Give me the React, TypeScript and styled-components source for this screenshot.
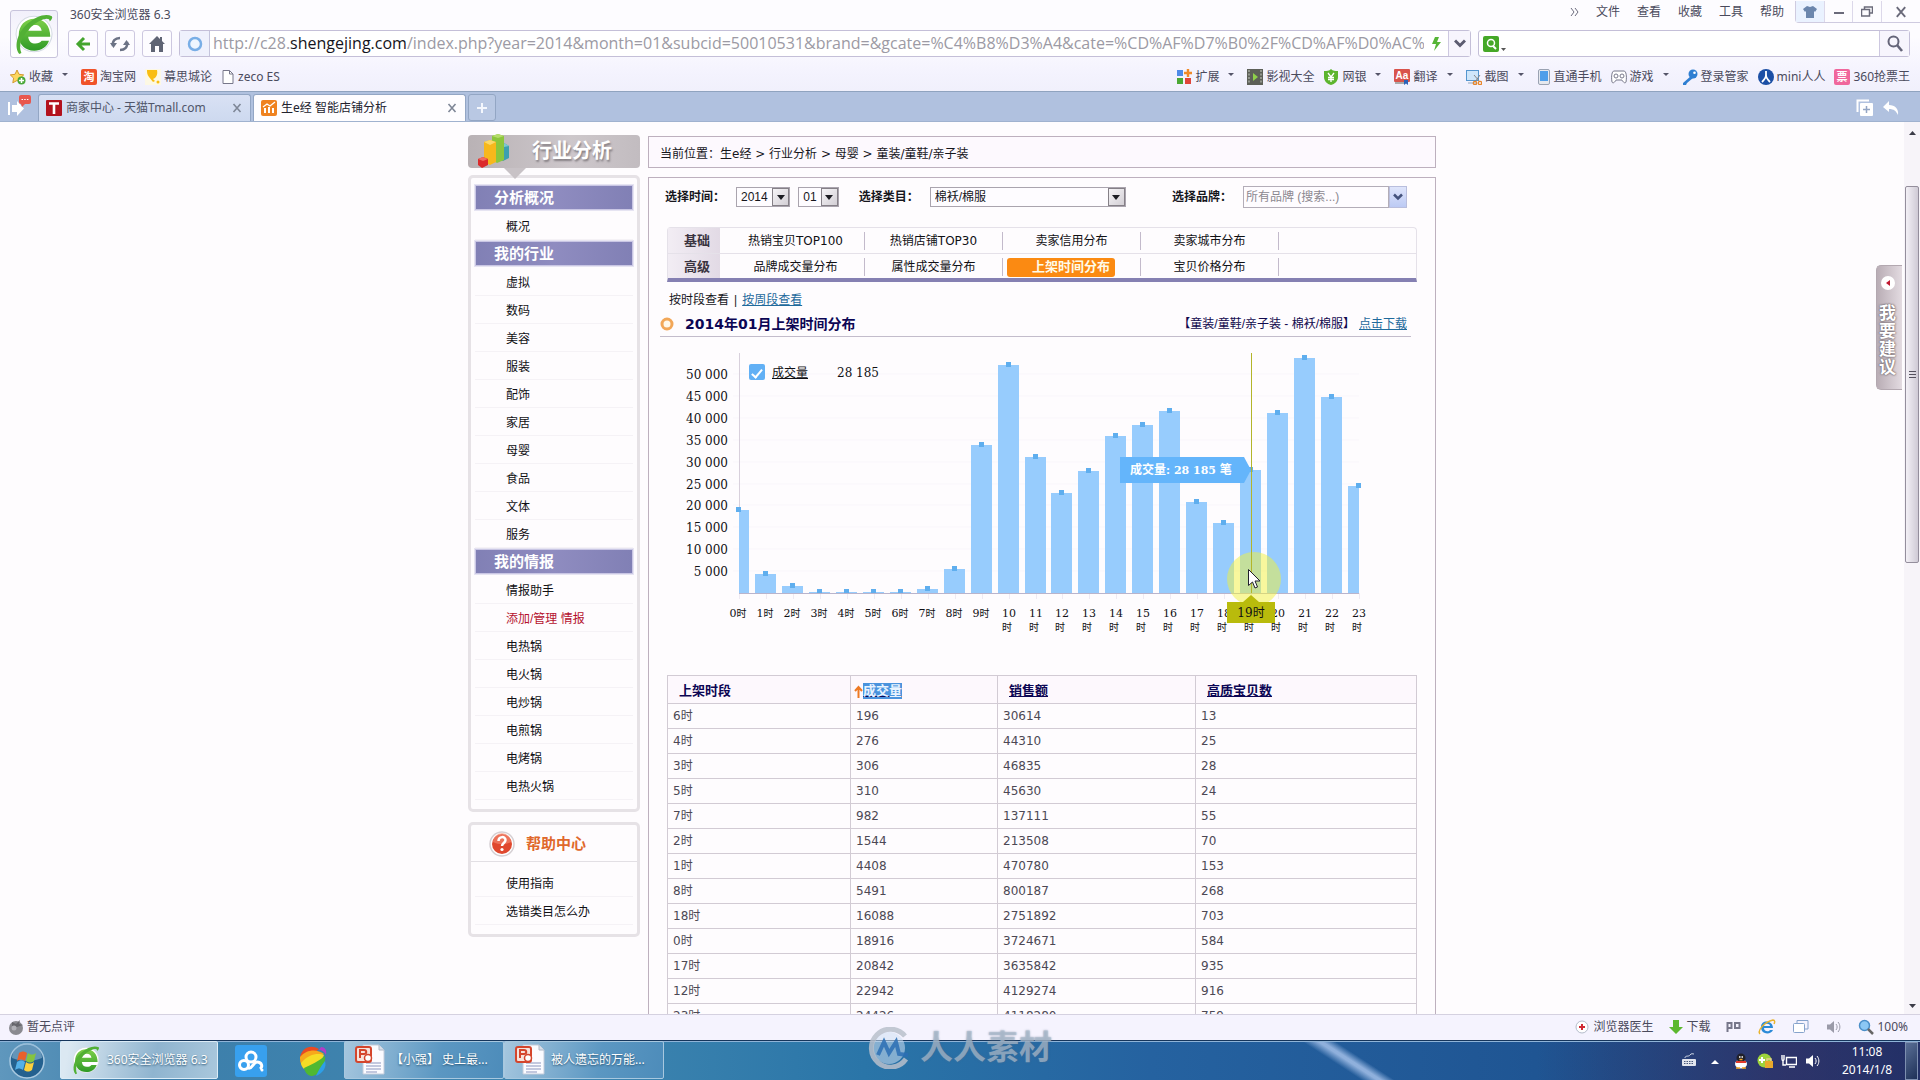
import React from 'react';
import styled, { createGlobalStyle, css } from 'styled-components';

const ui = '"Noto Sans", "Noto Sans CJK SC", sans-serif';
const arial = '"Liberation Sans", "Noto Sans CJK SC", sans-serif';
const verdana = '"DejaVu Sans", "Noto Sans CJK SC", sans-serif';
const georgia = '"DejaVu Serif", "Noto Sans CJK SC", serif';

const Global = createGlobalStyle`
  *, *::before, *::after { box-sizing: border-box; }
  body { margin: 0; background: #fefcfe; }
  button, input, select { font: inherit; color: inherit; margin: 0; }
  ul { list-style: none; margin: 0; padding: 0; }
  svg { display: block; flex: none; }
`;

const Screen = styled.div`
  position: relative;
  height: 100vh;
  display: flex;
  flex-direction: column;
  overflow: hidden;
  font: 12px/16px ${ui};
  color: #4a4a5c;
`;

const plainButton = css`
  appearance: none;
  border: 0;
  background: none;
  padding: 0;
  display: flex;
  align-items: center;
  justify-content: center;
  white-space: nowrap;
`;

/* ---------- browser chrome ---------- */
const Chrome = styled.header`
  flex: none;
  background: linear-gradient(#fdfcff 30%, #f4f3fe 60%, #ebebf8);
`;
const ChromeTop = styled.div`
  display: flex;
  gap: 10px;
  padding: 0 10px 0 10px;
`;
const LogoButton = styled.button`
  ${plainButton}
  width: 48px;
  height: 48px;
  margin-top: 10px;
  border: 1px solid #c8c4dc;
  border-radius: 3px;
  background: linear-gradient(#f2f0fb, #fff);
`;
const ChromeRight = styled.div`
  flex: 1;
  min-width: 0;
`;
const TitleRow = styled.div`
  display: flex;
  justify-content: space-between;
  height: 30px;
  margin-right: -10px;
`;
const WindowTitle = styled.span`
  padding: 7px 0 0 2px;
`;
const Menu = styled.nav`
  display: flex;
  gap: 17px;
  height: 24px;
  align-items: center;
`;
const MenuButton = styled.button`
  ${plainButton}
`;
const WindowButtons = styled.div`
  display: flex;
  margin-left: -6px;
  height: 22px;
  border: 1px solid #cfcbe0;
  border-width: 0 0 1px 1px;
  border-radius: 0 0 0 4px;
`;
const WindowButton = styled.button<{ $w: number; $tint?: boolean }>`
  ${plainButton}
  width: ${(p) => p.$w}px;
  background: ${(p) => (p.$tint ? '#eaf2ff' : 'transparent')};
  & + & { border-left: 1px solid #dcd8ea; }
`;
const AddressRow = styled.div`
  display: flex;
  gap: 7px;
  height: 27px;
`;
const ToolButton = styled.button`
  ${plainButton}
  width: 30px;
  border: 1px solid #cdc8e0;
  border-radius: 3px;
  background: #fdfcff;
`;
const AddressBar = styled.div`
  flex: 1;
  min-width: 0;
  display: flex;
  align-items: stretch;
  border: 1px solid #c4bfd8;
  border-radius: 3px;
  background: #fff;
`;
const Identity = styled.button`
  ${plainButton}
  width: 30px;
  background: #eff1fc;
  border-right: 1px solid #c4c4dc;
`;
const Url = styled.div`
  flex: 1;
  min-width: 0;
  padding-left: 3px;
  overflow: hidden;
  white-space: nowrap;
  font: 16px/25px "Open Sans", "Noto Sans", sans-serif;
  color: #9c9aa4;
  outline: 0;
  b { font-weight: 400; color: #141420; }
`;
const BarButton = styled.button<{ $w: number; $line?: boolean }>`
  ${plainButton}
  width: ${(p) => p.$w}px;
  ${(p) => p.$line && 'border-left: 1px solid #cdc8e0; background: #f7f5fd;'}
`;
const SearchBar = styled.form`
  display: flex;
  width: 432px;
  border: 1px solid #c4bfd8;
  border-radius: 3px;
  background: #fff;
`;
const SearchInput = styled.input`
  flex: 1;
  min-width: 0;
  border: 0;
  background: none;
  outline: 0;
`;
const Bookmarks = styled.nav`
  display: flex;
  justify-content: space-between;
  height: 34px;
  padding: 4px 10px 0;
  border-bottom: 1px solid #8fa3bf;
`;
const BookmarkGroup = styled.div`
  display: flex;
  align-items: center;
  gap: 9px;
`;
const Bookmark = styled.button`
  ${plainButton}
  gap: 3px;
`;
const Caret = styled.i`
  margin: 0 4px 4px 6px;
  border: 3px solid transparent;
  border-top-color: #555568;
  border-bottom: 0;
`;
const TabBar = styled.div`
  display: flex;
  align-items: flex-end;
  height: 30px;
  padding: 0 20px 0 0;
  background: #b0c1df;
  border-bottom: 1px solid #a0b2cf;
`;
const SideToggle = styled.button`
  ${plainButton}
  width: 38px;
  height: 29px;
`;
const Tab = styled.div<{ $active?: boolean }>`
  display: flex;
  align-items: center;
  gap: 4px;
  width: 213px;
  height: 27px;
  margin-right: 2px;
  padding: 0 8px 0 7px;
  border: 1px solid #93a6c4;
  border-bottom: 0;
  border-radius: 3px 3px 0 0;
  background: ${(p) => (p.$active ? '#fefdff' : 'linear-gradient(#d9e1f4, #cdd9ef)')};
  color: ${(p) => (p.$active ? '#22222e' : '#50566a')};
`;
const TabLabel = styled.button`
  ${plainButton}
  flex: 1;
  justify-content: flex-start;
`;
const NewTab = styled.button`
  ${plainButton}
  width: 28px;
  height: 27px;
  border: 1px solid #93a6c4;
  border-radius: 3px;
  background: #b9c8e3;
`;
const TabTools = styled.div`
  display: flex;
  gap: 8px;
  align-items: center;
  height: 27px;
  margin-left: auto;
`;

/* ---------- web page ---------- */
const Viewport = styled.div`
  position: relative;
  flex: 1;
  min-height: 0;
  display: flex;
  overflow: hidden;
`;
const Page = styled.div`
  flex: 1;
  min-width: 0;
  display: flex;
  justify-content: center;
  align-items: flex-start;
  gap: 8px;
  padding-top: 13px;
  overflow: hidden;
  background: #fefcfe;
  font-family: ${arial};
  color: #16161c;
`;
const Sidebar = styled.aside`
  width: 172px;
  flex: none;
`;
const SideTitle = styled.h1`
  position: relative;
  display: flex;
  align-items: center;
  gap: 22px;
  height: 33px;
  margin: 0 0 7px;
  padding: 0 0 2px 10px;
  border-radius: 4px;
  background: linear-gradient(90deg, #b9b2b5, #cdc7cb 60%, #c2bcc0);
  font: bold 20px/30px ${arial};
  color: #fff;
  text-shadow: 1px 2px 2px #857f84;
  &::after {
    content: '';
    position: absolute;
    left: 36px;
    top: 33px;
    z-index: 1;
    border: 11px solid transparent;
    border-top-color: #c8c2c6;
    border-bottom: 0;
  }
`;
const SideBox = styled.section`
  border: 3px solid #e6e2e6;
  border-radius: 5px;
  padding: 6px 4px 9px;
  & + & { margin-top: 10px; padding: 0 0 9px; }
`;
const SideHeading = styled.h2`
  height: 25px;
  margin: 1px 0 2px;
  padding-left: 18px;
  border: 1px solid #c9c6e4;
  outline: 1px solid #e6e4f2;
  background: linear-gradient(90deg, #8180b5, #8f8cc0 50%, #8180b5);
  font: bold 15px/24px ${arial};
  color: #fff;
`;
const SideItem = styled.li<{ $red?: boolean }>`
  height: 28px;
  padding-left: 31px;
  border-bottom: 1px solid #f5f2f6;
  line-height: 30px;
  a {
    color: ${(p) => (p.$red ? '#b5122e' : '#101014')};
    text-decoration: none;
  }
`;
const HelpHeading = styled.h2`
  display: flex;
  align-items: center;
  gap: 11px;
  height: 37px;
  margin: 0 0 7px;
  padding: 2px 0 0 18px;
  border-bottom: 1px solid #e2dfe4;
  font: bold 15px/20px ${arial};
  color: #e0682c;
`;
const HelpList = styled.ul`
  padding: 0 4px;
`;
const Main = styled.main`
  width: 788px;
  flex: none;
  padding-top: 1px;
`;
const Crumbs = styled.nav`
  height: 32px;
  margin-bottom: 9px;
  padding-left: 11px;
  border: 1px solid #bdb0be;
  background: #fdf9fe;
  font: 12px/34px ${verdana};
`;
const Panel = styled.section`
  border: 1px solid #bdb0be;
  padding: 8px 18px 0;
`;
const Filters = styled.div`
  display: flex;
  align-items: center;
  height: 22px;
  margin: 0 10px 19px -2px;
`;
const FilterLabel = styled.label`
  width: 72px;
  font-weight: bold;
`;
const Picker = styled.span<{ $w: number; $gap: number }>`
  display: grid;
  width: ${(p) => p.$w}px;
  height: 20px;
  margin-right: ${(p) => p.$gap}px;
  border: 1px solid #aaa4ae;
  > * { grid-area: 1 / 1; }
`;
const PickerSelect = styled.select`
  appearance: none;
  min-width: 0;
  padding: 0 4px;
  border: 0;
  background: #fefcff;
`;
const PickerArrow = styled.span`
  justify-self: end;
  display: grid;
  place-items: center;
  width: 17px;
  border: 1px solid #858087;
  background: linear-gradient(135deg, #f6f4f7, #d3cfd5);
  pointer-events: none;
`;
const BrandBox = styled.span`
  display: flex;
  width: 164px;
  height: 22px;
  margin-left: auto;
`;
const BrandInput = styled.input`
  flex: 1;
  min-width: 0;
  padding: 0 2px;
  border: 1px solid #b3adb8;
  background: #fefcff;
  &::placeholder { color: #8c8890; opacity: 1; }
`;
const BrandButton = styled.button`
  ${plainButton}
  width: 18px;
  border: 1px solid #b9bedd;
  background: linear-gradient(#dfe5fb, #bccaf4);
`;
const NavGrid = styled.nav`
  margin-bottom: 8px;
  border: 1px solid #e5e1e9;
  border-bottom: 4px solid #8580b2;
  border-radius: 4px 4px 0 0;
  font-family: ${verdana};
`;
const NavRow = styled.div`
  display: flex;
  height: 25px;
  & + & { border-top: 1px solid #e5e1e9; }
`;
const NavHead = styled.strong`
  width: 52px;
  margin-right: 7px;
  padding-left: 16px;
  line-height: 25px;
  font-size: 13px;
  color: #3a3440;
  background: linear-gradient(90deg, #f2edf4, #e2dae5);
`;
const NavCell = styled.span`
  width: 138px;
  height: 18px;
  margin-top: 4px;
  border-right: 1px solid #c3bacb;
  line-height: 18px;
  text-align: center;
`;
const NavLink = styled.a<{ $on?: boolean }>`
  color: #101014;
  text-decoration: none;
  ${(p) => p.$on && css`
    display: block;
    width: 108px;
    height: 19px;
    margin-left: 4px;
    padding-right: 5px;
    border-radius: 3px;
    background: #fb8a12;
    color: #fffbe8;
    font-size: 13px;
    font-weight: bold;
    text-align: right;
  `}
`;
const ViewSwitch = styled.p`
  display: flex;
  gap: 5px;
  height: 20px;
  margin: 0 0 1px;
  padding-left: 2px;
  line-height: 21px;
`;
const Link = styled.a`
  color: #1f6a9c;
  text-decoration: underline;
`;
const SectionTitle = styled.div`
  display: flex;
  align-items: center;
  height: 26px;
  margin: 0 6px 0 -7px;
  border-bottom: 1px solid #c3bccb;
  padding-right: 4px;
  h2 {
    flex: 1;
    margin: 0 0 0 11px;
    font: bold 14px/20px ${verdana};
    color: #0c0654;
  }
  span { color: #120a4e; margin-right: 4px; }
`;
const ChartFrame = styled.figure`
  position: relative;
  margin: 0;
  height: 338px;
`;
const Legend = styled.div`
  position: absolute;
  left: 82px;
  top: 26px;
  display: flex;
  align-items: center;
  color: #101014;
  label { margin: 2px 29px 0 7px; text-decoration: underline; }
  output { padding-top: 2px; font: 12px/16px ${georgia}; }
`;
const LegendCheck = styled.input`
  appearance: none;
  width: 16px;
  height: 16px;
  border-radius: 2px;
  background: #62b0f5;
  display: grid;
  place-items: center;
  &:checked::before {
    content: '';
    width: 6px;
    height: 11px;
    border: solid #fff;
    border-width: 0 2px 2px 0;
    transform: rotate(40deg);
  }
`;
const DataTable = styled.table`
  width: 100%;
  table-layout: fixed;
  border-collapse: collapse;
  font: 12px/16px ${verdana};
  color: #4c4854;
  th, td { border: 1px solid #d2cbd4; text-align: left; }
  td { height: 25px; padding: 0 5px; }
  th {
    height: 28px;
    padding: 3px 11px 0;
    background: #fdf8fd;
    color: #0c0654;
    font-size: 13px;
  }
`;
const SortButton = styled.button<{ $active?: boolean }>`
  ${plainButton}
  font-weight: bold;
  text-decoration: underline;
  ${(p) => p.$active && 'margin-left: -8px;'}
  mark { background: #4a93dd; color: #e8f3ff; }
`;
const Col = styled.col<{ $w: string }>`
  width: ${(p) => p.$w};
`;
const Feedback = styled.button`
  ${plainButton}
  position: absolute;
  right: 18px;
  top: 143px;
  flex-direction: column;
  gap: 14px;
  width: 26px;
  height: 125px;
  padding: 0 4px 3px 0;
  border: 1px solid #b3a8b0;
  border-right: 0;
  border-radius: 5px 0 0 5px;
  background: linear-gradient(90deg, #b9adb5, #e3dbe1);
  font: bold 17px/18px ${arial};
  color: #fff;
  text-shadow: 0 0 2px #6d6369, 0 0 2px #6d6369;
  span { width: 17px; white-space: normal; }
`;
const Scrollbar = styled.div`
  display: flex;
  flex-direction: column;
  align-items: center;
  justify-content: space-between;
  width: 16px;
  padding: 9px 0 6px;
  background: #f7f4f9;
`;
const Thumb = styled.div`
  display: grid;
  place-items: center;
  width: 14px;
  height: 43%;
  margin: 51px 0 auto;
  border: 1px solid #948e9c;
  border-radius: 2px;
  background: linear-gradient(90deg, #f3f0f6, #cfcad5);
`;

/* ---------- status bar and taskbar ---------- */
const StatusBar = styled.footer`
  flex: none;
  display: flex;
  align-items: center;
  justify-content: space-between;
  height: 26px;
  padding: 0 12px 2px 8px;
  border-top: 1px solid #d5d1e0;
  background: #f5f3fe;
`;
const StatusGroup = styled.div`
  display: flex;
  align-items: center;
  gap: 16px;
`;
const StatusButton = styled.button`
  ${plainButton}
  gap: 3px;
`;
const Taskbar = styled.footer`
  flex: none;
  display: flex;
  align-items: stretch;
  height: 40px;
  border-top: 1px solid #16365c;
  box-shadow: inset 0 1px 0 #8fb4d8;
  background:
    linear-gradient(33deg, #8fb0dc00 42%, #8fb0dc 49%, #8fb0dc 51%, #8fb0dc00 57%) 1270px 0 / 160px 40px no-repeat,
    linear-gradient(90deg, transparent 80%, #3b255a88 93%, #2a1c5866),
    linear-gradient(90deg, #5f97bd, #3d7fab 8%, #3f86b0 30%, #2a75a8 45%, #2562a0 60%, #1f5593 80%, #1d3d70);
  color: #fff;
`;
const Start = styled.button`
  ${plainButton}
  width: 54px;
  margin-right: 6px;
`;
const Task = styled.button<{ $w: number; $active?: boolean }>`
  ${plainButton}
  justify-content: flex-start;
  gap: 6px;
  width: ${(p) => p.$w}px;
  margin: 0 ${(p) => (p.$active ? 2 : 0)}px 1px 0;
  padding-left: 10px;
  border: 1px solid ${(p) => (p.$active ? '#dcecf7' : '#a8c8df')};
  border-radius: 2px;
  background: ${(p) => (p.$active
    ? 'linear-gradient(100deg, #dbe8f2 5%, #8fb4cf 60%, #a9c7dc)'
    : 'linear-gradient(100deg, #a5c6de, #5b97c2 60%, #4d8cba)')};
  text-shadow: 0 1px 2px #24506f;
`;
const PinnedTask = styled.button`
  ${plainButton}
  width: 62px;
`;
const Tray = styled.div`
  display: flex;
  align-items: center;
  gap: 8px;
  margin-left: auto;
`;
const Clock = styled.time`
  width: 62px;
  margin: 0 -1px 0 7px;
  line-height: 18px;
  text-align: center;
`;
const ShowDesktop = styled.button`
  ${plainButton}
  width: 13px;
  height: 38px;
  margin-right: 2px;
  border: 1px solid #7d8fb0;
  background: linear-gradient(135deg, #5a6f96, #1e3158);
`;
const Watermark = styled.div`
  position: absolute;
  left: 868px;
  bottom: 10px;
  display: flex;
  align-items: center;
  gap: 10px;
  font: bold 33px/44px ${arial};
  color: #aebfd0a8;
  text-shadow: 0 0 2px #5c708799;
  pointer-events: none;
`;

/* ---------- icons ---------- */
const Svg = ({ s = 16, w, h, vb, children }: { s?: number; w?: number; h?: number; vb?: string; children: React.ReactNode }) => (
  <svg width={w ?? s} height={h ?? s} viewBox={vb ?? `0 0 ${w ?? s} ${h ?? s}`} fill="none" aria-hidden="true">{children}</svg>
);

const BrowserLogo = ({ s }: { s: number }) => (
  <Svg s={s} vb="0 0 40 40">
    <defs>
      <linearGradient id="leaf" x1="0" y1="0" x2="0" y2="1"><stop offset="0" stopColor="#7ed04a" /><stop offset="1" stopColor="#2f9a26" /></linearGradient>
    </defs>
    <path d="M20 3a17 17 0 1 0 .1 0Z" fill="#fff" stroke="#d5dbe4" />
    <path d="M35.500 22.500H14.500c.5 4.500 3 6.500 6.800 6.500 2.700 0 4.600-.8 6-2.500h7c-2 6-7.400 9.500-14 9.500C11.500 36 5.500 30 5.500 21S11.500 5.500 20.500 5.500s15 6.500 15 17ZM14.700 17h12.600c-.6-3.600-2.900-5.500-6.200-5.500-3.400 0-5.700 2-6.400 5.500Z" fill="url(#leaf)" />
    <path d="M6 39C1 33 3 20 14 10 22 3 31 0 37 3c1 1 0 3-2 5 0-3-3-3-6-2-6 2-11 6-15 11C8 24 5 31 8 38Z" fill="#52b035" />
  </Svg>
);
const StarIcon = () => (
  <Svg><path d="m7 1 2 4.300 4.700.6-3.400 3.200.8 4.700L7 11.500l-4.200 2.300.8-4.700L.3 5.900 5 5.300Z" fill="#fcd75e" stroke="#d39a2e" />
    <circle cx="11.500" cy="11.500" r="4" fill="#4aa83a" /><path d="M11.500 9v5M9 11.500h5" stroke="#fff" strokeWidth="1.500" /></Svg>
);
const GlyphIcon = ({ bg, ch, round = 2 }: { bg: string; ch: string; round?: number }) => (
  <Svg><rect width="16" height="16" rx={round} fill={bg} /><text x="8" y="12" textAnchor="middle" fontSize="11" fontWeight="bold" fill="#fff" fontFamily={arial}>{ch}</text></Svg>
);
const TrophyIcon = () => (
  <Svg><rect width="16" height="16" fill="#fdf8e4" /><path d="M2 1h10c1 5-1 8-4 9l2 2-2 1-4-5C2 6 2 3 2 1Z" fill="#f9bd12" /><circle cx="13" cy="13" r="1.500" fill="#f9bd12" /></Svg>
);
const PageIcon = () => (
  <Svg w={14} h={16}><path d="M2 1.500h6.500L12 5v9.500H2Z" fill="#fff" stroke="#77778a" /><path d="M8.500 1.500V5H12" stroke="#77778a" /></Svg>
);
const AppsIcon = () => (
  <Svg><path d="M1 1h6v6H1z" fill="#4f8be8" /><path d="M1 9h6v6H1z" fill="#4aa834" /><path d="M9 9h6v6H9z" fill="#e0453a" /><path d="M12 0v8M8 4h8" stroke="#f08a28" strokeWidth="2.400" /></Svg>
);
const FilmIcon = () => (
  <Svg><path d="M0 0h16v16H0z" fill="#5d6058" /><path d="M2 1v14M14 1v14" stroke="#c8ccc2" strokeDasharray="2 1.500" /><path d="m6 4 5 4-5 4Z" fill="#8ed04a" /></Svg>
);
const ShieldIcon = () => (
  <Svg><path d="M8 0c2 2 4 2 7 2v6c0 4-3 7-7 8-4-1-7-4-7-8V2c3 0 5 0 7-2Z" fill="#5cb52e" /><path d="m5 4 3 4 3-4M8 8v5M5 8.500h6M5 10.500h6" stroke="#fff" strokeWidth="1.300" /></Svg>
);
const TranslateIcon = () => (
  <Svg><rect width="16" height="13" rx="1" fill="#d9544c" /><text x="8" y="10" textAnchor="middle" fontSize="10" fontWeight="bold" fill="#fff" fontFamily={arial}>Aa</text><path d="M1 14h9" stroke="#aaa" strokeWidth="2" /><path d="M10 11h4v5l-2-1.500L10 16Z" fill="#2b62b8" /></Svg>
);
const CropIcon = () => (
  <Svg><rect x=".5" y="1.500" width="12" height="10" fill="#cfe6fa" stroke="#5596cf" /><path d="M2 14h9" stroke="#8fa7bd" /><path d="m8 6 6 7M14 6l-5 7" stroke="#888" /><circle cx="9" cy="14" r="1.700" stroke="#e8862a" strokeWidth="1.300" /><circle cx="14" cy="14" r="1.700" stroke="#e8862a" strokeWidth="1.300" /></Svg>
);
const PhoneIcon = () => (
  <Svg w={14}><rect x="1.500" y=".5" width="11" height="15" rx="1.500" fill="#e5e8ee" stroke="#9aa2b2" /><path d="M3 2h8v10H3z" fill="#4e9eea" /></Svg>
);
const PadIcon = () => (
  <Svg><path d="M3 2h10c2 0 3 5 2 11-1 2-3 0-4-2H5c-1 2-3 4-4 2C0 7 1 2 3 2Z" fill="#fff" stroke="#77788a" /><circle cx="5" cy="7" r="2" stroke="#77788a" /><circle cx="11" cy="7" r="2" stroke="#77788a" /></Svg>
);
const KeyIcon = () => (
  <Svg><path d="M9 7 1 14v2h3l1-2 6-5Z" fill="#2f7fd2" /><circle cx="11" cy="5" r="4.500" fill="#2f7fd2" /><circle cx="12.500" cy="3.800" r="1.300" fill="#fff" /></Svg>
);
const RenrenIcon = () => (
  <Svg><circle cx="8" cy="8" r="8" fill="#1c4fa5" /><path d="M8 2v4c0 3-2 5-4 7M8 6c0 3 2 5 4 7" stroke="#fff" strokeWidth="1.800" /></Svg>
);
const CloseIcon = ({ c = '#7f8797', s = 10 }) => (
  <Svg s={s} vb="0 0 10 10"><path d="m1.500 1 7 8m0-8-7 8" stroke={c} strokeWidth="1.600" /></Svg>
);
const SpeakerIcon = ({ c }: { c: string }) => (
  <Svg><path d="M1 5.500h3L8 2v12l-4-3.500H1Z" fill={c} /><path d="M10 5c1.500 2 1.500 4 0 6m2-8c2.500 3 2.500 7 0 10" stroke={c} /></Svg>
);
const PptIcon = () => (
  <Svg w={30} h={32}>
    <path d="M8 1h16l5 5v24H8Z" fill="#fbfbff" stroke="#c4ccda" /><path d="M24 1v5h5" fill="#d8dfe9" stroke="#b0b9c8" />
    <path d="M11 19h15M11 22h15M11 25h15M11 28h11" stroke="#8a95bd" />
    <rect x="1" y="3" width="15" height="15" rx="2" fill="#f7e3dc" stroke="#d4452c" strokeWidth="2" />
    <path d="M5 14V6h4c3 0 3 4 0 4H6" stroke="#d4452c" strokeWidth="2" /><circle cx="13" cy="14" r="3.500" fill="#fff" stroke="#d4452c" strokeWidth="1.500" />
  </Svg>
);

/* ---------- data ---------- */
const hourly = [18916, 4408, 1544, 306, 276, 310, 196, 982, 5491, 33850, 52100, 31130, 22942, 27900, 35900, 38450, 41600, 20842, 16088, 28185, 41200, 53750, 44850, 24426];
const rows = [
  ['6时', '196', '30614', '13'], ['4时', '276', '44310', '25'], ['3时', '306', '46835', '28'],
  ['5时', '310', '45630', '24'], ['7时', '982', '137111', '55'], ['2时', '1544', '213508', '70'],
  ['1时', '4408', '470780', '153'], ['8时', '5491', '800187', '268'], ['18时', '16088', '2751892', '703'],
  ['0时', '18916', '3724671', '584'], ['17时', '20842', '3635842', '935'], ['12时', '22942', '4129274', '916'],
  ['23时', '24426', '4118280', '759'],
];
const sideGroups = [
  { title: '分析概况', items: ['概况'] },
  { title: '我的行业', items: ['虚拟', '数码', '美容', '服装', '配饰', '家居', '母婴', '食品', '文体', '服务'] },
  { title: '我的情报', items: ['情报助手', '添加/管理 情报', '电热锅', '电火锅', '电炒锅', '电煎锅', '电烤锅', '电热火锅'] },
];
const navRows = [
  { head: '基础', items: ['热销宝贝TOP100', '热销店铺TOP30', '卖家信用分布', '卖家城市分布'] },
  { head: '高级', items: ['品牌成交量分布', '属性成交量分布', '上架时间分布', '宝贝价格分布'] },
];

const spaced = (n: number) => String(n).replace(/(\d)(?=(\d{3})+$)/g, '$1 ');

const HourChart = () => {
  const left = 72;
  const base = 256;
  const right = 692;
  const unit = 0.00438;
  const top = (v: number) => Math.round(base - v * unit);
  const hourX = (i: number) => Math.round(left + (i * (right - left)) / 23);
  return (
    <svg width="100%" height="338" role="img" aria-label="上架时间分布" fontFamily={georgia} fill="#101014">
      {Array.from({ length: 10 }, (_, i) => (i + 1) * 5000).map((v) => (
        <g key={v}>
          <path d={`M${left - 6} ${top(v)}H${right}`} stroke="#f9f6fb" />
          <text x="61" y={top(v) + 5} fontSize="12" textAnchor="end">{spaced(v)}</text>
        </g>
      ))}
      <path d={`M${left + 0.5} 16V${base}`} stroke="#d8d0dc" />
      {hourly.map((v, i) => {
        const x = hourX(i);
        const from = i === 0 ? x : x - 11;
        const to = i === 23 ? x : x + 10;
        return (
          <g key={i}>
            <path d={`M${x + 0.5} ${base}v6`} stroke="#efeaf2" />
            <rect x={from} y={top(v)} width={to - from} height={base - top(v)} fill="#97ccfd" />
            <rect x={x - 3} y={top(v) - 3} width="5" height="5" fill="#5faeee" />
            {i < 10
              ? <text x={x - 1} y={base + 24} fontSize="11" textAnchor="middle">{i}<tspan fontSize="10">时</tspan></text>
              : (
                <text y={base + 24} fontSize="11" textAnchor="middle">
                  <tspan x={x}>{i}</tspan><tspan x={x - 2} dy="14" fontSize="10">时</tspan>
                </text>
              )}
          </g>
        );
      })}
      <path d={`M${left} ${base + 0.5}H${right}`} stroke="#b9b4cc" />
      <circle cx="587" cy="242" r="27" fill="#f2f23c" fillOpacity=".5" />
      <path d="M584.500 16V256" stroke="#b3b52a" />
      <path d="M453 120h124l7 13-7 13H453Z" fill="#64b5fb" />
      <text x="463" y="137" fontSize="12" fontWeight="bold" fill="#fff">
        成交量<tspan fontSize="11">: 28 185 </tspan>笔
      </text>
      <path d="M560 265h16l8-7 8 7h16v21h-48Z" fill="#b9bb0c" />
      <text x="584" y="280" fontSize="12" textAnchor="middle">19时</text>
      <path d="M581.500 232.500v16l4-3.500 2.500 6 2.500-1-2.500-6h5Z" fill="#fff" stroke="#20202c" />
    </svg>
  );
};

const SelectField = ({ id, label, value, w, gap }: { id: string; label: string; value: string; w: number; gap: number }) => (
  <Picker $w={w} $gap={gap}>
    <PickerSelect id={id} aria-label={label} defaultValue={value}><option>{value}</option></PickerSelect>
    <PickerArrow><Svg w={8} h={5}><path d="M0 0h8L4 5Z" fill="#1c1c22" /></Svg></PickerArrow>
  </Picker>
);

const Item = ({ icon, label, more }: { icon: React.ReactNode; label: string; more?: boolean }) => (
  <Bookmark>{icon}{label}{more && <Caret />}</Bookmark>
);

export default function App() {
  return (
    <Screen>
      <Global />
      <Chrome>
        <ChromeTop>
          <LogoButton aria-label="360"><BrowserLogo s={42} /></LogoButton>
          <ChromeRight>
            <TitleRow>
              <WindowTitle>360安全浏览器 6.3</WindowTitle>
              <Menu>
                <MenuButton aria-label="more"><Svg w={9} h={10}><path d="m1 1 3 4-3 4m4-8 3 4-3 4" stroke="#6c6c7e" /></Svg></MenuButton>
                {['文件', '查看', '收藏', '工具', '帮助'].map((m) => <MenuButton key={m}>{m}</MenuButton>)}
                <WindowButtons>
                  <WindowButton $w={28} $tint aria-label="skin"><Svg w={14} h={12}><path d="m4 0 3 1 3-1 4 3-2 3-1-1v7H3V5L2 6 0 3Z" fill="#6b86ad" /></Svg></WindowButton>
                  <WindowButton $w={28} aria-label="minimize"><Svg w={10} h={10}><path d="M0 6h10" stroke="#6a6a7a" strokeWidth="2" /></Svg></WindowButton>
                  <WindowButton $w={29} aria-label="restore"><Svg w={12} h={12}><path d="M3.500 3V1h8v6H9M.5 3.500h8V10h-8Z" stroke="#6a6a7a" strokeWidth="1.500" /></Svg></WindowButton>
                  <WindowButton $w={39} aria-label="close"><CloseIcon c="#6a6a7a" s={12} /></WindowButton>
                </WindowButtons>
              </Menu>
            </TitleRow>
            <AddressRow>
              <ToolButton aria-label="back"><Svg><path d="M9 2 3 8l6 6M3 8h12" stroke="#44a52e" strokeWidth="3" /></Svg></ToolButton>
              <ToolButton aria-label="reload"><Svg s={20}><path d="M3 12c-1-5 2-8 7-8m7 4c1 5-2 8-7 8" stroke="#6c7385" strokeWidth="2.400" /><path d="m0 9 3.500 5L7 9ZM13 11l3.500-5L20 11Z" fill="#6c7385" /></Svg></ToolButton>
              <ToolButton aria-label="home"><Svg s={18}><path d="M9 1 1 9h2v8h4v-6h4v6h4V9h2l-3-3V2h-2v2Z" fill="#5f6474" /></Svg></ToolButton>
              <AddressBar>
                <Identity aria-label="site"><Svg><circle cx="8" cy="8" r="6" fill="#eef6ff" stroke="#78aee6" strokeWidth="2.500" /></Svg></Identity>
                <Url role="textbox" aria-label="address" contentEditable suppressContentEditableWarning spellCheck={false}>
                  http://c28.<b>shengejing.com</b>/index.php?year=2014&amp;month=01&amp;subcid=50010531&amp;brand=&amp;gcate=%C4%B8%D3%A4&amp;cate=%CD%AF%D7%B0%2F%CD%AF%D0%AC%
                </Url>
                <BarButton $w={24} aria-label="speed"><Svg w={10} h={14}><path d="M4 0h4L6 5h4L3 14l2-7H1Z" fill="#56b536" /></Svg></BarButton>
                <BarButton $w={22} $line aria-label="history"><Svg w={12} h={9}><path d="m1 1.500 5 5 5-5" stroke="#5c5c70" strokeWidth="3" /></Svg></BarButton>
              </AddressBar>
              <SearchBar>
                <BarButton $w={32} type="button" aria-label="engine">
                  <Svg w={24} h={16}><rect width="16" height="16" rx="2" fill="#45a827" /><circle cx="8" cy="7" r="3.500" stroke="#fff" strokeWidth="1.500" /><path d="m10 10 3 3" stroke="#fff" strokeWidth="2" /><path d="M18 12h5l-2.500 3Z" fill="#555" /></Svg>
                </BarButton>
                <SearchInput aria-label="search" />
                <BarButton $w={30} $line type="submit" aria-label="go"><Svg s={18}><circle cx="7.500" cy="6.500" r="5" stroke="#656579" strokeWidth="2" /><path d="m11 10 5 6" stroke="#656579" strokeWidth="2.600" /></Svg></BarButton>
              </SearchBar>
            </AddressRow>
          </ChromeRight>
        </ChromeTop>
        <Bookmarks>
          <BookmarkGroup>
            <Item icon={<StarIcon />} label="收藏" more />
            <Item icon={<GlyphIcon bg="#f0532a" ch="淘" />} label="淘宝网" />
            <Item icon={<TrophyIcon />} label="幕思城论" />
            <Item icon={<PageIcon />} label="zeco ES" />
          </BookmarkGroup>
          <BookmarkGroup>
            <Item icon={<AppsIcon />} label="扩展" more />
            <Item icon={<FilmIcon />} label="影视大全" />
            <Item icon={<ShieldIcon />} label="网银" more />
            <Item icon={<TranslateIcon />} label="翻译" more />
            <Item icon={<CropIcon />} label="截图" more />
            <Item icon={<PhoneIcon />} label="直通手机" />
            <Item icon={<PadIcon />} label="游戏" more />
            <Item icon={<KeyIcon />} label="登录管家" />
            <Item icon={<RenrenIcon />} label="mini人人" />
            <Item icon={<GlyphIcon bg="#f0679c" ch="票" />} label="360抢票王" />
          </BookmarkGroup>
        </Bookmarks>
        <TabBar>
          <SideToggle aria-label="sidebar">
            <Svg w={24} h={26}><path d="M2 8v13" stroke="#fff" strokeWidth="2" /><path d="M5 11h5V7l7 7.500-7 7.500v-4H5Z" fill="#fff" /><rect x="12" y="1" width="12" height="9" rx="2" fill="#e8574e" /><path d="m14 10 1 3 3-3" fill="#e8574e" /><path d="M14.500 5.500h7" stroke="#fff" strokeDasharray="1.500 1.200" /></Svg>
          </SideToggle>
          <Tab>
            <Svg><rect width="16" height="16" rx="1" fill="#b3121d" /><path d="M3 3.500h10M8 3.500V14" stroke="#fff" strokeWidth="2.600" /></Svg>
            <TabLabel>商家中心 - 天猫Tmall.com</TabLabel>
            <MenuButton aria-label="close tab"><CloseIcon /></MenuButton>
          </Tab>
          <Tab $active>
            <Svg><rect width="16" height="16" rx="2" fill="#ef8321" /><path d="M4 13V8m4 5V7m4 6V8" stroke="#fff" strokeWidth="2" /><path d="m2 7 4-3 3 2 5-4" stroke="#fff" strokeWidth="1.300" /></Svg>
            <TabLabel>生e经 智能店铺分析</TabLabel>
            <MenuButton aria-label="close tab"><CloseIcon /></MenuButton>
          </Tab>
          <NewTab aria-label="new tab"><Svg w={12} h={12}><path d="M6 1v10M1 6h10" stroke="#f4f7fd" strokeWidth="2" /></Svg></NewTab>
          <TabTools>
            <MenuButton aria-label="duplicate"><Svg s={18}><path d="M1.500 13V1.500H13" stroke="#fff" strokeWidth="2" /><rect x="4" y="4" width="13" height="13" rx="1" fill="#fff" /><path d="M10.500 7v7M7 10.500h7" stroke="#93a5c4" strokeWidth="1.500" /></Svg></MenuButton>
            <MenuButton aria-label="undo"><Svg s={18}><path d="m7 2-6 6 6 5V10c5 0 7 2 9 6 1-6-3-10-9-10Z" fill="#fff" /></Svg></MenuButton>
          </TabTools>
        </TabBar>
      </Chrome>

      <Viewport>
        <Page>
          <Sidebar>
            <SideTitle>
              <Svg w={32} h={34}>
                <path d="m20 11 6-2 5 3v12l-6 3-5-2Z" fill="#3d9fb0" /><path d="m20 11 6 2 5-1-5-3Z" fill="#7cc8cf" />
                <path d="m14 2 6-2 6 2v24l-7 3-5-3Z" fill="#8cc63c" /><path d="m14 2 6 2 6-2-6-2Z" fill="#b5dc6c" />
                <path d="m6 8 6-2 6 2v20l-6 3-6-3Z" fill="#f7b81c" /><path d="m6 8 6 3 6-3-6-2Z" fill="#fbd96a" />
                <path d="m0 25 5-2 5 2v6l-6 3-4-3Z" fill="#db2a2c" /><path d="m0 25 5 2 5-2-5-2Z" fill="#ef6d5e" />
              </Svg>
              行业分析
            </SideTitle>
            <SideBox>
              {sideGroups.map((g) => (
                <React.Fragment key={g.title}>
                  <SideHeading>{g.title}</SideHeading>
                  <ul>
                    {g.items.map((t) => <SideItem key={t} $red={t.startsWith('添加')}><a href="#item">{t}</a></SideItem>)}
                  </ul>
                </React.Fragment>
              ))}
            </SideBox>
            <SideBox>
              <HelpHeading>
                <Svg s={26}><circle cx="13" cy="13" r="12" fill="#fff" stroke="#d5cfd3" strokeWidth="1.500" /><circle cx="13" cy="13" r="10" fill="#e0482e" /><path d="M4 11a9 9 0 0 1 18 0c-6 3-12 3-18 0Z" fill="#f39078" fillOpacity=".6" /><path d="M9.500 10c0-5 7-5 7-1 0 3-3.500 3-3.500 6" stroke="#fff" strokeWidth="2.500" /><circle cx="13" cy="18.500" r="1.600" fill="#fff" /></Svg>
                帮助中心
              </HelpHeading>
              <HelpList>
                {['使用指南', '选错类目怎么办'].map((t) => <SideItem key={t}><a href="#help">{t}</a></SideItem>)}
              </HelpList>
            </SideBox>
          </Sidebar>

          <Main>
            <Crumbs>当前位置：生e经 &gt; 行业分析 &gt; 母婴 &gt; 童装/童鞋/亲子装</Crumbs>
            <Panel>
              <Filters>
                <FilterLabel htmlFor="year">选择时间：</FilterLabel>
                <SelectField id="year" label="年" value="2014" w={55} gap={8} />
                <SelectField id="month" label="月" value="01" w={41} gap={20} />
                <FilterLabel htmlFor="cate">选择类目：</FilterLabel>
                <SelectField id="cate" label="类目" value="棉袄/棉服" w={199} gap={46} />
                <FilterLabel htmlFor="brand">选择品牌：</FilterLabel>
                <BrandBox>
                  <BrandInput id="brand" placeholder="所有品牌 (搜索...)" />
                  <BrandButton aria-label="品牌"><Svg w={10} h={8}><path d="m1 1.500 4 4 4-4" stroke="#44527c" strokeWidth="2.500" /></Svg></BrandButton>
                </BrandBox>
              </Filters>
              <NavGrid>
                {navRows.map((r) => (
                  <NavRow key={r.head}>
                    <NavHead>{r.head}</NavHead>
                    {r.items.map((t) => (
                      <NavCell key={t}><NavLink href="#nav" $on={t === '上架时间分布'}>{t}</NavLink></NavCell>
                    ))}
                  </NavRow>
                ))}
              </NavGrid>
              <ViewSwitch><span>按时段查看</span>|<Link href="#week">按周段查看</Link></ViewSwitch>
              <SectionTitle>
                <Svg s={14}><circle cx="7" cy="7" r="5" fill="#fff8ea" stroke="#f2a758" strokeWidth="3" /></Svg>
                <h2>2014年01月上架时间分布</h2>
                <span>【童装/童鞋/亲子装 - 棉袄/棉服】</span>
                <Link href="#download">点击下载</Link>
              </SectionTitle>
              <ChartFrame>
                <HourChart />
                <Legend>
                  <LegendCheck type="checkbox" id="series" defaultChecked />
                  <label htmlFor="series">成交量</label>
                  <output>28 185</output>
                </Legend>
              </ChartFrame>
              <DataTable>
                <colgroup><Col $w="183px" /><Col $w="147px" /><Col $w="198px" /><Col $w="auto" /></colgroup>
                <thead>
                  <tr>
                    <th>上架时段</th>
                    <th>
                      <SortButton $active>
                        <Svg w={9} h={13}><path d="M4.500 13V3M1 6l3.500-4L8 6" stroke="#ee7a24" strokeWidth="2" /></Svg>
                        <mark>成交量</mark>
                      </SortButton>
                    </th>
                    <th><SortButton>销售额</SortButton></th>
                    <th><SortButton>高质宝贝数</SortButton></th>
                  </tr>
                </thead>
                <tbody>
                  {rows.map((r) => <tr key={r[0]}>{r.map((c, i) => <td key={i}>{c}</td>)}</tr>)}
                </tbody>
              </DataTable>
            </Panel>
          </Main>
        </Page>
        <Feedback>
          <Svg><circle cx="8" cy="8" r="7" fill="#fff" /><path d="M10 5v6L6 8Z" fill="#c01830" /></Svg>
          <span>我要建议</span>
        </Feedback>
        <Scrollbar>
          <Svg w={7} h={4}><path d="M0 4h7L3.500 0Z" fill="#3c3c48" /></Svg>
          <Thumb><Svg w={7} h={9}><path d="M0 1.500h7M0 4.500h7M0 7.500h7" stroke="#55515e" /></Svg></Thumb>
          <Svg w={7} h={4}><path d="M0 0h7L3.500 4Z" fill="#3c3c48" /></Svg>
        </Scrollbar>
      </Viewport>

      <StatusBar>
        <StatusButton>
          <Svg><circle cx="8" cy="9" r="7" fill="#8a8a90" /><path d="M4 3 8 5l4-4-1 4 4 1-6 2-5-1Z" fill="#66666c" /><circle cx="6" cy="9" r="2.500" fill="#b0b0b6" /></Svg>
          暂无点评
        </StatusButton>
        <StatusGroup>
          <StatusButton><Svg><circle cx="8" cy="8" r="6" fill="#fff" stroke="#b4bccb" /><path d="M8 5v6M5 8h6" stroke="#d02a34" strokeWidth="2" /></Svg>浏览器医生</StatusButton>
          <StatusButton><Svg w={14} h={16}><path d="M4 1h6v7h4l-7 7-7-7h4Z" fill="#5cb82e" /></Svg>下载</StatusButton>
          <StatusButton aria-label="pip"><Svg w={16} h={12}><path d="M1.500 11V2h4v5h-4M8 7h5.500V2H9v5" stroke="#77778a" strokeWidth="2" /></Svg></StatusButton>
          <StatusButton aria-label="ie"><Svg w={18}><path d="M15 9H6c0 4 5 4 6 2h3c-2 5-12 5-12-3s12-7 12 1ZM6 7h6c0-3-6-3-6 0Z" fill="#2a8ad8" /><path d="M2 15C-1 12 6 3 15 1c2 0 2 2 1 4" stroke="#e8b42e" strokeWidth="1.500" /></Svg></StatusButton>
          <StatusButton aria-label="window"><Svg w={18}><path d="M5 4V1.500h11V10h-3" stroke="#86a3cc" /><rect x="1.500" y="4.500" width="11" height="9" rx="1" fill="#fff" stroke="#86a3cc" /></Svg></StatusButton>
          <StatusButton aria-label="sound"><SpeakerIcon c="#9a9aa8" /></StatusButton>
          <StatusButton><Svg><circle cx="6.500" cy="6.500" r="5" fill="#8cc8f4" stroke="#4a8fc8" strokeWidth="1.500" /><path d="m10 10 5 5" stroke="#666" strokeWidth="2.500" /></Svg>100%</StatusButton>
        </StatusGroup>
      </StatusBar>

      <Taskbar>
        <Start aria-label="开始">
          <Svg s={36}>
            <circle cx="18" cy="18" r="17" fill="#24618f" stroke="#a9c9e0" strokeWidth="1.500" />
            <path d="M3 15a15 15 0 0 1 30 0c-10 4-20 4-30 0Z" fill="#8eb8d6" fillOpacity=".6" />
            <path d="M10 10c3-2 5-2 8 0l-2 8c-3-2-5-2-8 0Z" fill="#e8602c" /><path d="M19 10c3 2 5 2 8 0l-2 8c-3 2-5 2-8 0Z" fill="#85c440" />
            <path d="M8 19c3-2 5-2 8 0l-2 8c-3-2-5-2-8 0Z" fill="#54b0e8" /><path d="M17 19c3 2 5 2 8 0l-2 8c-3 2-5 2-8 0Z" fill="#fcd03c" />
          </Svg>
        </Start>
        <Task $w={158} $active><BrowserLogo s={30} />360安全浏览器 6.3</Task>
        <PinnedTask aria-label="cloud">
          <Svg s={32}><rect width="32" height="32" rx="3" fill="#38a0ee" /><circle cx="9" cy="20" r="4.500" stroke="#fff" strokeWidth="3" /><circle cx="16" cy="12" r="5" stroke="#fff" strokeWidth="3" /><path d="M13 23c4 2 5-6 9-6 5 0 6 5 3 7" stroke="#fff" strokeWidth="3" /><circle cx="27" cy="25" r="1.500" fill="#fff" /></Svg>
        </PinnedTask>
        <PinnedTask aria-label="player">
          <Svg s={32}><path d="M3 12C5 3 13-1 22 4L10 14Z" fill="#e94b22" /><path d="M3 12C10 4 20 4 27 9L5 20C3 18 3 15 3 12Z" fill="#f7a81c" /><path d="M4 18C12 8 22 8 27 10c-3 8-12 16-20 14C5 22 4 20 4 18Z" fill="#f6dc26" /><path d="M7 23C14 20 22 16 28 11c1 10-6 20-14 20-4-1-6-4-7-8Z" fill="#4fb832" /><path d="M28 16c2 6-2 12-9 15 2-5 5-10 9-15Z" fill="#2d9fe8" /><path d="M24 2c4 0 6 3 5 8-1-3-4-5-7-5Z" fill="#b43cc8" /></Svg>
        </PinnedTask>
        <Task $w={160}><PptIcon />【小强】 史上最...</Task>
        <Task $w={160}><PptIcon />被人遗忘的万能...</Task>
        <Tray>
          <Svg><path d="M4 5c0-3 4-1 5-3s3-1 4-1" stroke="#cfd8e6" /><rect x="1" y="6" width="14" height="7" rx="1" fill="#e2e6ee" /><path d="M3 8.500h10M3 10.500h10" stroke="#48597c" strokeDasharray="1.500 1" /></Svg>
          <Svg w={20}><path d="M6 11h8l-4-4Z" fill="#fff" /></Svg>
          <Svg><ellipse cx="8" cy="11" rx="6" ry="4.500" fill="#fff" /><circle cx="8" cy="5" r="4.500" fill="#20202a" /><path d="M6 4h1.500M8.500 4H10" stroke="#fff" strokeWidth="1.500" /><path d="M3 9h10" stroke="#e23a2c" strokeWidth="2" /><path d="M3 15h4m2 0h4M6.500 6.500h3" stroke="#f5a623" strokeWidth="1.600" /></Svg>
          <Svg><circle cx="7.500" cy="7.500" r="7" fill="#9ed43c" /><path d="M2 7h6M5 4v6" stroke="#fff" strokeWidth="2" /><rect x="8" y="8" width="8" height="7" fill="#e8a92c" /><path d="M10 8V6h4v2" stroke="#e8d08c" strokeWidth="1.500" /></Svg>
          <Svg><path d="M5.500 4.500h10v7h-10ZM8 14h6M1 2v4c0 2 2 2 2 0V2M2 7v5h3" stroke="#fff" strokeWidth="1.400" /></Svg>
          <SpeakerIcon c="#fff" />
          <Clock>11:08<br />2014/1/8</Clock>
          <ShowDesktop aria-label="显示桌面" />
        </Tray>
      </Taskbar>
      <Watermark>
        <Svg s={42}><circle cx="21" cy="21" r="16" fill="#cfe0f2" fillOpacity=".55" /><path d="M37 9A19 19 0 1 0 38 32" stroke="#b9c0cb" strokeWidth="5" strokeOpacity=".85" /><path d="m10 28 6-13 5 11 7-11 3 12 9 1" stroke="#2c6fb4" strokeWidth="4" strokeOpacity=".85" /></Svg>
        人人素材
      </Watermark>
    </Screen>
  );
}
